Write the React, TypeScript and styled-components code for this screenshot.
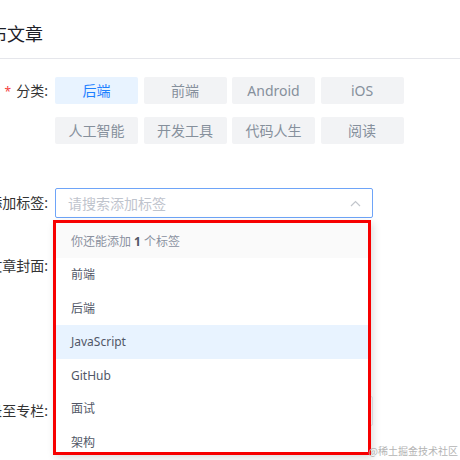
import React from "react";
import styled, { createGlobalStyle } from "styled-components";

const GlobalStyle = createGlobalStyle`
  html, body { margin: 0; padding: 0; background: #fff; }
  body { font-family: "Noto Sans", "Noto Sans CJK SC", sans-serif; }
  * { box-sizing: border-box; }
`;

const Page = styled.div`
  width: 460px;
  height: 460px;
  overflow: hidden;
  position: relative;
  background: #fff;
`;

const Header = styled.header`
  height: 59px;
  padding-top: 10px;
  border-bottom: 1px solid #e5e6eb;
  display: flex;
  align-items: center;
`;

const Title = styled.h1`
  margin: 0 0 0 -29px;
  font-size: 18px;
  font-weight: 400;
  color: #1d2129;
  line-height: 28px;
  white-space: nowrap;
`;

const Form = styled.div`
  margin-left: -45px;
  padding-top: 18px;
  display: flex;
  flex-direction: column;
`;

const Row = styled.div<{ $mt?: number }>`
  display: grid;
  grid-template-columns: 100px 1fr;
  align-items: start;
  margin-top: ${(p) => p.$mt ?? 0}px;
`;

const Label = styled.div<{ $lh: number }>`
  text-align: right;
  padding-right: 7px;
  font-size: 14px;
  line-height: ${(p) => p.$lh}px;
  color: #333;
  white-space: nowrap;
`;

const Star = styled.span`
  color: #f53f3f;
  font-size: 12px;
  margin-right: 5px;
`;

const ButtonGrid = styled.div`
  display: grid;
  grid-template-columns: repeat(4, 83px);
  column-gap: 5.5px;
  row-gap: 13px;
`;

const CatButton = styled.div<{ $active?: boolean }>`
  height: 27px;
  line-height: 27px;
  text-align: center;
  font-size: 14px;
  border-radius: 2px;
  background: ${(p) => (p.$active ? "#e8f3ff" : "#f2f3f5")};
  color: ${(p) => (p.$active ? "#1e80ff" : "#86909c")};
`;

const SelectBox = styled.div`
  position: relative;
  width: 318px;
  height: 30px;
  border: 1px solid #6ea4f8;
  border-radius: 2px;
  padding: 0 11px 0 12px;
  display: flex;
  align-items: center;
  justify-content: space-between;
`;

const Placeholder = styled.span`
  font-size: 14px;
  color: #bfc4cd;
`;

const Dropdown = styled.div`
  position: absolute;
  top: 31px;
  left: -3px;
  width: 318px;
  height: 235px;
  border: 3px solid #f70000;
  background: #fff;
  overflow: hidden;
  box-shadow: 2px 3px 8px rgba(0, 0, 0, 0.14);
  z-index: 5;
`;

const DropHeader = styled.div`
  height: 35px;
  padding: 2px 0 0 15px;
  line-height: 33px;
  background: #fafafa;
  font-size: 12px;
  color: #8a919f;
  b { color: #515767; font-weight: 700; margin: 0 3px; }
`;

const DropItem = styled.div<{ $active?: boolean }>`
  height: 33.5px;
  line-height: 33.5px;
  padding-left: 15px;
  font-size: 12px;
  color: #515767;
  background: ${(p) => (p.$active ? "#e8f3ff" : "transparent")};
`;

const CoverBox = styled.div`
  width: 160px;
  height: 100px;
  border: 1px dashed #e5e6eb;
  background: #fafafa;
`;

const PlainBox = styled.div`
  width: 318px;
  height: 30px;
  border: 1px solid #e5e6eb;
  border-radius: 2px;
`;

const Watermark = styled.div`
  position: absolute;
  right: 2px;
  bottom: 3px;
  font-size: 10px;
  line-height: 12px;
  color: #b4b4b4;
  z-index: 10;
  font-family: "Noto Sans CJK SC", sans-serif;
`;

const categories = ["后端", "前端", "Android", "iOS", "人工智能", "开发工具", "代码人生", "阅读"];
const tags = ["前端", "后端", "JavaScript", "GitHub", "面试", "架构"];

export default function App() {
  return (
    <Page>
      <GlobalStyle />
      <Header>
        <Title>发布文章</Title>
      </Header>
      <Form>
        <Row>
          <Label $lh={27}>
            <Star>*</Star>分类:
          </Label>
          <ButtonGrid>
            {categories.map((c, i) => (
              <CatButton key={c} $active={i === 0}>
                {c}
              </CatButton>
            ))}
          </ButtonGrid>
        </Row>
        <Row $mt={44}>
          <Label $lh={30}>添加标签:</Label>
          <SelectBox>
            <Placeholder>请搜索添加标签</Placeholder>
            <svg width="11" height="7" viewBox="0 0 11 7" fill="none">
              <path d="M1 6L5.5 1.5L10 6" stroke="#c2c6cc" strokeWidth="1.2" />
            </svg>
            <Dropdown>
              <DropHeader>
                你还能添加<b>1</b>个标签
              </DropHeader>
              {tags.map((t) => (
                <DropItem key={t} $active={t === "JavaScript"}>
                  {t}
                </DropItem>
              ))}
            </Dropdown>
          </SelectBox>
        </Row>
        <Row $mt={38}>
          <Label $lh={20}>文章封面:</Label>
          <CoverBox />
        </Row>
        <Row $mt={40}>
          <Label $lh={30}>收录至专栏:</Label>
          <PlainBox />
        </Row>
      </Form>
      <Watermark>@稀土掘金技术社区</Watermark>
    </Page>
  );
}
